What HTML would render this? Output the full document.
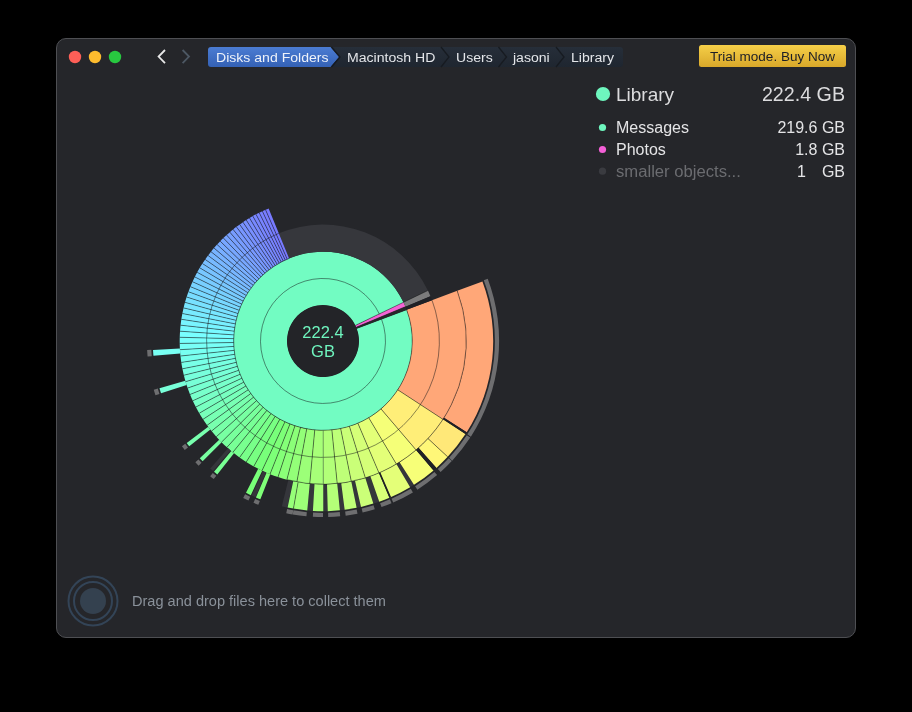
<!DOCTYPE html>
<html><head><meta charset="utf-8">
<style>
html,body{margin:0;padding:0;background:#000;width:912px;height:712px;overflow:hidden;}
body{font-family:"Liberation Sans",sans-serif;position:relative;}
.win{position:absolute;left:56px;top:38px;width:798px;height:598px;background:#25262a;border:1px solid #4e4f53;border-radius:10px;}
.bc{top:50px;font-size:12.5px;line-height:16px;color:#e4e6ea;transform-origin:0 0;}
.abs{position:absolute;white-space:nowrap;-webkit-font-smoothing:antialiased;will-change:transform;}
</style></head><body>
<div class="win"></div>
<svg class="abs" style="left:0;top:0" width="912" height="712" viewBox="0 0 912 712">
<circle cx="75" cy="57" r="6.2" fill="#fe5f57"/>
<circle cx="95" cy="57" r="6.2" fill="#febc2e"/>
<circle cx="115" cy="57" r="6.2" fill="#28c840"/>
<path d="M165,50 L158.6,56.6 L165,63.2" fill="none" stroke="#e8e8e8" stroke-width="1.8"/>
<path d="M182.6,50 L189,56.6 L182.6,63.2" fill="none" stroke="#4d5864" stroke-width="1.8"/>
<path d="M406.64,309.73A89.3,89.3 0 1 1 403.67,302.70L355.52,325.56A36,36 0 1 0 356.72,328.39Z" fill="#72fcc2"/>
<path d="M403.47,302.27A89.3,89.3 0 0 1 405.44,306.68L356.24,327.17A36,36 0 0 0 355.44,325.39Z" fill="#f464d6"/>
<path d="M278.83,233.31A116.4,116.4 0 0 1 427.89,290.52L403.47,302.27A89.3,89.3 0 0 0 289.11,258.38Z" fill="#36373c"/>
<path d="M427.89,290.52A116.4,116.4 0 0 1 430.46,296.27L405.44,306.68A89.3,89.3 0 0 0 403.47,302.27Z" fill="#7b7b7c"/>
<path d="M457.23,290.82A143.3,143.3 0 0 1 442.98,419.36L397.77,389.83A89.3,89.3 0 0 0 406.64,309.73Z" fill="#ffa778"/>
<path d="M482.42,281.39A170.2,170.2 0 0 1 466.70,432.20L443.99,417.78A143.3,143.3 0 0 0 457.23,290.82Z" fill="#ffa778"/>
<path d="M442.98,419.36A143.3,143.3 0 0 1 416.07,449.97L381.00,408.90A89.3,89.3 0 0 0 397.77,389.83Z" fill="#ffee78"/>
<path d="M416.07,449.97A143.3,143.3 0 0 1 396.38,464.09L368.73,417.71A89.3,89.3 0 0 0 381.00,408.90Z" fill="#f5ff78"/>
<path d="M396.38,464.09A143.3,143.3 0 0 1 378.99,472.91L357.89,423.20A89.3,89.3 0 0 0 368.73,417.71Z" fill="#e3ff78"/>
<path d="M378.99,472.91A143.3,143.3 0 0 1 365.37,477.89L349.41,426.31A89.3,89.3 0 0 0 357.89,423.20Z" fill="#d5ff78"/>
<path d="M365.37,477.89A143.3,143.3 0 0 1 351.32,481.47L340.65,428.54A89.3,89.3 0 0 0 349.41,426.31Z" fill="#caff78"/>
<path d="M351.32,481.47A143.3,143.3 0 0 1 337.23,483.59L331.87,429.86A89.3,89.3 0 0 0 340.65,428.54Z" fill="#beff78"/>
<path d="M337.23,483.59A143.3,143.3 0 0 1 323.25,484.30L323.16,430.30A89.3,89.3 0 0 0 331.87,429.86Z" fill="#b2ff78"/>
<path d="M323.25,484.30A143.3,143.3 0 0 1 309.76,483.69L314.75,429.92A89.3,89.3 0 0 0 323.16,430.30Z" fill="#a7ff78"/>
<path d="M309.76,483.69A143.3,143.3 0 0 1 296.89,481.90L306.73,428.80A89.3,89.3 0 0 0 314.75,429.92Z" fill="#9cff78"/>
<path d="M296.89,481.90A143.3,143.3 0 0 1 286.88,479.67L300.49,427.42A89.3,89.3 0 0 0 306.73,428.80Z" fill="#93ff78"/>
<path d="M286.88,479.67A143.3,143.3 0 0 1 278.00,477.05L294.96,425.78A89.3,89.3 0 0 0 300.49,427.42Z" fill="#8bff78"/>
<path d="M278.00,477.05A143.3,143.3 0 0 1 270.02,474.14L289.98,423.97A89.3,89.3 0 0 0 294.96,425.78Z" fill="#84ff78"/>
<path d="M270.02,474.14A143.3,143.3 0 0 1 261.99,470.66L284.98,421.80A89.3,89.3 0 0 0 289.98,423.97Z" fill="#7dff78"/>
<path d="M261.99,470.66A143.3,143.3 0 0 1 253.75,466.45L279.84,419.18A89.3,89.3 0 0 0 284.98,421.80Z" fill="#78ff7a"/>
<path d="M253.75,466.45A143.3,143.3 0 0 1 246.22,461.99L275.15,416.40A89.3,89.3 0 0 0 279.84,419.18Z" fill="#78ff82"/>
<path d="M246.22,461.99A143.3,143.3 0 0 1 239.58,457.52L271.02,413.61A89.3,89.3 0 0 0 275.15,416.40Z" fill="#78ff89"/>
<path d="M239.58,457.52A143.3,143.3 0 0 1 232.82,452.37L266.80,410.40A89.3,89.3 0 0 0 271.02,413.61Z" fill="#78ff8f"/>
<path d="M232.82,452.37A143.3,143.3 0 0 1 226.93,447.33L263.13,407.26A89.3,89.3 0 0 0 266.80,410.40Z" fill="#78ff96"/>
<path d="M226.93,447.33A143.3,143.3 0 0 1 221.49,442.15L259.75,404.03A89.3,89.3 0 0 0 263.13,407.26Z" fill="#78ff9c"/>
<path d="M221.49,442.15A143.3,143.3 0 0 1 216.34,436.70L256.53,400.64A89.3,89.3 0 0 0 259.75,404.03Z" fill="#78ffa2"/>
<path d="M216.34,436.70A143.3,143.3 0 0 1 211.55,431.08L253.55,397.13A89.3,89.3 0 0 0 256.53,400.64Z" fill="#78ffa8"/>
<path d="M211.55,431.08A143.3,143.3 0 0 1 207.11,425.28L250.78,393.52A89.3,89.3 0 0 0 253.55,397.13Z" fill="#78ffae"/>
<path d="M207.11,425.28A143.3,143.3 0 0 1 203.00,419.33L248.22,389.81A89.3,89.3 0 0 0 250.78,393.52Z" fill="#78ffb4"/>
<path d="M203.00,419.33A143.3,143.3 0 0 1 199.25,413.26L245.88,386.03A89.3,89.3 0 0 0 248.22,389.81Z" fill="#78ffba"/>
<path d="M199.25,413.26A143.3,143.3 0 0 1 195.84,407.07L243.76,382.17A89.3,89.3 0 0 0 245.88,386.03Z" fill="#78ffc0"/>
<path d="M195.84,407.07A143.3,143.3 0 0 1 192.77,400.80L241.85,378.26A89.3,89.3 0 0 0 243.76,382.17Z" fill="#78ffc6"/>
<path d="M192.77,400.80A143.3,143.3 0 0 1 190.04,394.46L240.15,374.31A89.3,89.3 0 0 0 241.85,378.26Z" fill="#78ffcb"/>
<path d="M190.04,394.46A143.3,143.3 0 0 1 187.65,388.07L238.65,370.33A89.3,89.3 0 0 0 240.15,374.31Z" fill="#78ffd1"/>
<path d="M187.65,388.07A143.3,143.3 0 0 1 185.59,381.65L237.37,366.33A89.3,89.3 0 0 0 238.65,370.33Z" fill="#78ffd7"/>
<path d="M185.59,381.65A143.3,143.3 0 0 1 183.85,375.22L236.28,362.32A89.3,89.3 0 0 0 237.37,366.33Z" fill="#78ffdc"/>
<path d="M183.85,375.22A143.3,143.3 0 0 1 182.42,368.79L235.40,358.32A89.3,89.3 0 0 0 236.28,362.32Z" fill="#78ffe1"/>
<path d="M182.42,368.79A143.3,143.3 0 0 1 181.31,362.39L234.70,354.33A89.3,89.3 0 0 0 235.40,358.32Z" fill="#78ffe7"/>
<path d="M181.31,362.39A143.3,143.3 0 0 1 180.49,356.02L234.19,350.36A89.3,89.3 0 0 0 234.70,354.33Z" fill="#78ffec"/>
<path d="M180.49,356.02A143.3,143.3 0 0 1 179.96,349.70L233.86,346.42A89.3,89.3 0 0 0 234.19,350.36Z" fill="#78fff1"/>
<path d="M179.96,349.70A143.3,143.3 0 0 1 179.72,343.45L233.71,342.53A89.3,89.3 0 0 0 233.86,346.42Z" fill="#78fff6"/>
<path d="M179.72,343.45A143.3,143.3 0 0 1 179.75,337.27L233.73,338.67A89.3,89.3 0 0 0 233.71,342.53Z" fill="#78fffb"/>
<path d="M179.75,337.27A143.3,143.3 0 0 1 180.04,331.18L233.91,334.88A89.3,89.3 0 0 0 233.73,338.67Z" fill="#78feff"/>
<path d="M180.04,331.18A143.3,143.3 0 0 1 180.58,325.18L234.25,331.14A89.3,89.3 0 0 0 233.91,334.88Z" fill="#78f9ff"/>
<path d="M180.58,325.18A143.3,143.3 0 0 1 181.35,319.30L234.73,327.48A89.3,89.3 0 0 0 234.25,331.14Z" fill="#78f4ff"/>
<path d="M181.35,319.30A143.3,143.3 0 0 1 182.36,313.53L235.36,323.88A89.3,89.3 0 0 0 234.73,327.48Z" fill="#78efff"/>
<path d="M182.36,313.53A143.3,143.3 0 0 1 183.58,307.88L236.12,320.36A89.3,89.3 0 0 0 235.36,323.88Z" fill="#78eaff"/>
<path d="M183.58,307.88A143.3,143.3 0 0 1 185.01,302.37L237.01,316.92A89.3,89.3 0 0 0 236.12,320.36Z" fill="#78e6ff"/>
<path d="M185.01,302.37A143.3,143.3 0 0 1 186.63,296.99L238.02,313.57A89.3,89.3 0 0 0 237.01,316.92Z" fill="#78e1ff"/>
<path d="M186.63,296.99A143.3,143.3 0 0 1 188.43,291.75L239.14,310.31A89.3,89.3 0 0 0 238.02,313.57Z" fill="#78dcff"/>
<path d="M188.43,291.75A143.3,143.3 0 0 1 190.40,286.67L240.37,307.14A89.3,89.3 0 0 0 239.14,310.31Z" fill="#78d8ff"/>
<path d="M190.40,286.67A143.3,143.3 0 0 1 192.53,281.73L241.70,304.07A89.3,89.3 0 0 0 240.37,307.14Z" fill="#78d3ff"/>
<path d="M192.53,281.73A143.3,143.3 0 0 1 194.81,276.96L243.11,301.09A89.3,89.3 0 0 0 241.70,304.07Z" fill="#78cfff"/>
<path d="M194.81,276.96A143.3,143.3 0 0 1 197.22,272.33L244.62,298.21A89.3,89.3 0 0 0 243.11,301.09Z" fill="#78cbff"/>
<path d="M197.22,272.33A143.3,143.3 0 0 1 199.76,267.87L246.20,295.43A89.3,89.3 0 0 0 244.62,298.21Z" fill="#78c7ff"/>
<path d="M199.76,267.87A143.3,143.3 0 0 1 202.42,263.57L247.86,292.75A89.3,89.3 0 0 0 246.20,295.43Z" fill="#78c2ff"/>
<path d="M202.42,263.57A143.3,143.3 0 0 1 205.18,259.44L249.58,290.17A89.3,89.3 0 0 0 247.86,292.75Z" fill="#78beff"/>
<path d="M205.18,259.44A143.3,143.3 0 0 1 208.03,255.46L251.35,287.70A89.3,89.3 0 0 0 249.58,290.17Z" fill="#78baff"/>
<path d="M208.03,255.46A143.3,143.3 0 0 1 210.96,251.65L253.18,285.32A89.3,89.3 0 0 0 251.35,287.70Z" fill="#78b6ff"/>
<path d="M210.96,251.65A143.3,143.3 0 0 1 213.98,248.00L255.06,283.05A89.3,89.3 0 0 0 253.18,285.32Z" fill="#78b3ff"/>
<path d="M213.98,248.00A143.3,143.3 0 0 1 217.05,244.51L256.98,280.87A89.3,89.3 0 0 0 255.06,283.05Z" fill="#78afff"/>
<path d="M217.05,244.51A143.3,143.3 0 0 1 220.18,241.18L258.93,278.80A89.3,89.3 0 0 0 256.98,280.87Z" fill="#78abff"/>
<path d="M220.18,241.18A143.3,143.3 0 0 1 223.36,238.01L260.91,276.82A89.3,89.3 0 0 0 258.93,278.80Z" fill="#78a7ff"/>
<path d="M223.36,238.01A143.3,143.3 0 0 1 226.57,235.00L262.91,274.94A89.3,89.3 0 0 0 260.91,276.82Z" fill="#78a4ff"/>
<path d="M226.57,235.00A143.3,143.3 0 0 1 229.82,232.13L264.93,273.16A89.3,89.3 0 0 0 262.91,274.94Z" fill="#78a0ff"/>
<path d="M229.82,232.13A143.3,143.3 0 0 1 233.09,229.42L266.97,271.47A89.3,89.3 0 0 0 264.93,273.16Z" fill="#789dff"/>
<path d="M233.09,229.42A143.3,143.3 0 0 1 236.37,226.85L269.02,269.87A89.3,89.3 0 0 0 266.97,271.47Z" fill="#7899ff"/>
<path d="M236.37,226.85A143.3,143.3 0 0 1 239.66,224.43L271.07,268.35A89.3,89.3 0 0 0 269.02,269.87Z" fill="#7896ff"/>
<path d="M239.66,224.43A143.3,143.3 0 0 1 242.95,222.14L273.12,266.93A89.3,89.3 0 0 0 271.07,268.35Z" fill="#7892ff"/>
<path d="M242.95,222.14A143.3,143.3 0 0 1 246.24,219.99L275.17,265.59A89.3,89.3 0 0 0 273.12,266.93Z" fill="#788fff"/>
<path d="M246.24,219.99A143.3,143.3 0 0 1 249.51,217.98L277.21,264.34A89.3,89.3 0 0 0 275.17,265.59Z" fill="#788cff"/>
<path d="M249.51,217.98A143.3,143.3 0 0 1 252.77,216.09L279.24,263.16A89.3,89.3 0 0 0 277.21,264.34Z" fill="#7889ff"/>
<path d="M252.77,216.09A143.3,143.3 0 0 1 256.01,214.32L281.25,262.06A89.3,89.3 0 0 0 279.24,263.16Z" fill="#7886ff"/>
<path d="M256.01,214.32A143.3,143.3 0 0 1 259.21,212.68L283.25,261.03A89.3,89.3 0 0 0 281.25,262.06Z" fill="#7883ff"/>
<path d="M259.21,212.68A143.3,143.3 0 0 1 262.39,211.15L285.23,260.08A89.3,89.3 0 0 0 283.25,261.03Z" fill="#7880ff"/>
<path d="M262.39,211.15A143.3,143.3 0 0 1 265.53,209.73L287.18,259.20A89.3,89.3 0 0 0 285.23,260.08Z" fill="#787dff"/>
<path d="M265.53,209.73A143.3,143.3 0 0 1 268.62,208.42L289.11,258.38A89.3,89.3 0 0 0 287.18,259.20Z" fill="#787aff"/>
<path d="M413.95,484.86A170.2,170.2 0 0 1 410.15,487.19L396.38,464.09A143.3,143.3 0 0 0 399.57,462.13Z" fill="#35363b"/>
<path d="M379.25,501.63A170.2,170.2 0 0 1 373.33,503.59L365.37,477.89A143.3,143.3 0 0 0 370.36,476.25Z" fill="#35363b"/>
<path d="M361.00,506.90A170.2,170.2 0 0 1 356.64,507.84L351.32,481.47A143.3,143.3 0 0 0 354.99,480.68Z" fill="#35363b"/>
<path d="M344.63,509.82A170.2,170.2 0 0 1 339.90,510.36L337.23,483.59A143.3,143.3 0 0 0 341.21,483.14Z" fill="#35363b"/>
<path d="M327.75,511.13A170.2,170.2 0 0 1 323.30,511.20L323.25,484.30A143.3,143.3 0 0 0 327.00,484.24Z" fill="#35363b"/>
<path d="M312.91,510.90A170.2,170.2 0 0 1 307.28,510.47L309.76,483.69A143.3,143.3 0 0 0 314.50,484.05Z" fill="#35363b"/>
<path d="M287.32,507.42A170.2,170.2 0 0 1 281.82,506.14L288.33,480.04A143.3,143.3 0 0 0 292.96,481.12Z" fill="#35363b"/>
<path d="M255.41,497.20A170.2,170.2 0 0 1 251.61,495.50L262.89,471.08A143.3,143.3 0 0 0 266.09,472.51Z" fill="#35363b"/>
<path d="M213.14,471.00A170.2,170.2 0 0 1 210.22,468.47L228.05,448.33A143.3,143.3 0 0 0 230.51,450.45Z" fill="#35363b"/>
<path d="M465.50,434.07A170.2,170.2 0 0 1 447.68,456.86L427.97,438.55A143.3,143.3 0 0 0 442.98,419.36Z" fill="#ffe878"/>
<path d="M447.68,456.86A170.2,170.2 0 0 1 436.44,467.88L418.51,447.83A143.3,143.3 0 0 0 427.97,438.55Z" fill="#fff778"/>
<path d="M433.54,470.42A170.2,170.2 0 0 1 413.95,484.86L399.57,462.13A143.3,143.3 0 0 0 416.07,449.97Z" fill="#f7ff78"/>
<path d="M410.15,487.19A170.2,170.2 0 0 1 390.59,497.20L379.91,472.51A143.3,143.3 0 0 0 396.38,464.09Z" fill="#e4ff78"/>
<path d="M389.50,497.67A170.2,170.2 0 0 1 379.25,501.63L370.36,476.25A143.3,143.3 0 0 0 378.99,472.91Z" fill="#d8ff78"/>
<path d="M373.33,503.59A170.2,170.2 0 0 1 361.00,506.90L354.99,480.68A143.3,143.3 0 0 0 365.37,477.89Z" fill="#cbff78"/>
<path d="M356.64,507.84A170.2,170.2 0 0 1 344.63,509.82L341.21,483.14A143.3,143.3 0 0 0 351.32,481.47Z" fill="#bfff78"/>
<path d="M339.90,510.36A170.2,170.2 0 0 1 327.75,511.13L327.00,484.24A143.3,143.3 0 0 0 337.23,483.59Z" fill="#b4ff78"/>
<path d="M323.30,511.20A170.2,170.2 0 0 1 312.91,510.90L314.50,484.05A143.3,143.3 0 0 0 323.25,484.30Z" fill="#a9ff78"/>
<path d="M307.28,510.47A170.2,170.2 0 0 1 293.45,508.61L298.12,482.12A143.3,143.3 0 0 0 309.76,483.69Z" fill="#9dff78"/>
<path d="M293.45,508.61A170.2,170.2 0 0 1 287.61,507.48L293.21,481.17A143.3,143.3 0 0 0 298.12,482.12Z" fill="#96ff78"/>
<path d="M260.35,499.25A170.2,170.2 0 0 1 255.95,497.44L266.55,472.71A143.3,143.3 0 0 0 270.25,474.24Z" fill="#7fff78"/>
<path d="M250.80,495.13A170.2,170.2 0 0 1 246.00,492.78L258.17,468.79A143.3,143.3 0 0 0 262.21,470.77Z" fill="#78ff78"/>
<path d="M217.28,474.38A170.2,170.2 0 0 1 214.05,471.76L231.27,451.10A143.3,143.3 0 0 0 233.99,453.30Z" fill="#78ff93"/>
<path d="M202.65,461.35A170.2,170.2 0 0 1 199.75,458.37L219.23,439.82A143.3,143.3 0 0 0 221.67,442.33Z" fill="#78ffa1"/>
<path d="M189.25,446.25A170.2,170.2 0 0 1 186.72,442.95L208.26,426.84A143.3,143.3 0 0 0 210.39,429.62Z" fill="#78ffae"/>
<path d="M161.04,393.31A170.2,170.2 0 0 1 159.48,388.20L185.32,380.74A143.3,143.3 0 0 0 186.64,385.04Z" fill="#78ffd8"/>
<path d="M153.45,355.83A170.2,170.2 0 0 1 153.03,349.91L179.90,348.50A143.3,143.3 0 0 0 180.25,353.49Z" fill="#78fff3"/>
<path d="M487.73,278.75A176.1,176.1 0 0 1 470.86,436.65L467.33,434.37A171.9,171.9 0 0 0 483.80,280.24Z" fill="#6e6e70"/>
<path d="M470.27,437.55A176.1,176.1 0 0 1 452.21,460.65L449.13,457.80A171.9,171.9 0 0 0 466.76,435.25Z" fill="#6e6e70"/>
<path d="M451.79,461.10A176.1,176.1 0 0 1 440.60,472.08L437.80,468.95A171.9,171.9 0 0 0 448.72,458.23Z" fill="#6e6e70"/>
<path d="M437.14,475.10A176.1,176.1 0 0 1 417.36,489.69L415.11,486.14A171.9,171.9 0 0 0 434.41,471.91Z" fill="#6e6e70"/>
<path d="M412.91,492.42A176.1,176.1 0 0 1 393.22,502.50L391.54,498.64A171.9,171.9 0 0 0 410.77,488.81Z" fill="#6e6e70"/>
<path d="M391.53,503.22A176.1,176.1 0 0 1 381.49,507.10L380.10,503.14A171.9,171.9 0 0 0 389.89,499.35Z" fill="#6e6e70"/>
<path d="M374.78,509.31A176.1,176.1 0 0 1 362.61,512.59L361.67,508.50A171.9,171.9 0 0 0 373.55,505.30Z" fill="#6e6e70"/>
<path d="M357.51,513.69A176.1,176.1 0 0 1 345.68,515.63L345.14,511.47A171.9,171.9 0 0 0 356.69,509.57Z" fill="#6e6e70"/>
<path d="M340.19,516.26A176.1,176.1 0 0 1 328.22,517.02L328.10,512.82A171.9,171.9 0 0 0 339.78,512.08Z" fill="#6e6e70"/>
<path d="M323.00,517.10A176.1,176.1 0 0 1 312.86,516.81L313.10,512.61A171.9,171.9 0 0 0 323.00,512.90Z" fill="#6e6e70"/>
<path d="M306.43,516.32A176.1,176.1 0 0 1 292.72,514.48L293.44,510.34A171.9,171.9 0 0 0 306.83,512.14Z" fill="#6e6e70"/>
<path d="M292.57,514.45A176.1,176.1 0 0 1 286.24,513.22L287.11,509.11A171.9,171.9 0 0 0 293.30,510.31Z" fill="#6e6e70"/>
<path d="M258.32,504.79A176.1,176.1 0 0 1 253.49,502.80L255.14,498.94A171.9,171.9 0 0 0 259.86,500.88Z" fill="#6e6e70"/>
<path d="M248.44,500.54A176.1,176.1 0 0 1 243.19,497.98L245.09,494.23A171.9,171.9 0 0 0 250.22,496.73Z" fill="#6e6e70"/>
<path d="M213.74,479.10A176.1,176.1 0 0 1 210.16,476.20L212.85,472.97A171.9,171.9 0 0 0 216.34,475.81Z" fill="#6e6e70"/>
<path d="M198.59,465.63A176.1,176.1 0 0 1 195.37,462.33L198.41,459.44A171.9,171.9 0 0 0 201.55,462.66Z" fill="#6e6e70"/>
<path d="M184.71,450.02A176.1,176.1 0 0 1 181.90,446.36L185.26,443.85A171.9,171.9 0 0 0 188.00,447.42Z" fill="#6e6e70"/>
<path d="M155.47,395.27A176.1,176.1 0 0 1 153.76,389.69L157.80,388.53A171.9,171.9 0 0 0 159.47,393.98Z" fill="#6e6e70"/>
<path d="M147.58,356.50A176.1,176.1 0 0 1 147.13,350.06L151.33,349.85A171.9,171.9 0 0 0 151.77,356.13Z" fill="#6e6e70"/>
<path d="M381.54,319.11A62.5,62.5 0 1 1 379.46,314.19M356.72,328.39L406.64,309.73M355.44,325.39L403.47,302.27M356.24,327.17L405.44,306.68M403.47,302.27L427.89,290.52M397.77,389.83L442.98,419.36M381.00,408.90L416.07,449.97M368.73,417.71L396.38,464.09M357.89,423.20L378.99,472.91M349.41,426.31L365.37,477.89M340.65,428.54L351.32,481.47M331.87,429.86L337.23,483.59M314.75,429.92L309.76,483.69M306.73,428.80L296.89,481.90M300.49,427.42L286.88,479.67M294.96,425.78L278.00,477.05M289.98,423.97L270.02,474.14M284.98,421.80L261.99,470.66M279.84,419.18L253.75,466.45M275.15,416.40L246.22,461.99M271.02,413.61L239.58,457.52M266.80,410.40L232.82,452.37M263.13,407.26L226.93,447.33M259.75,404.03L221.49,442.15M256.53,400.64L216.34,436.70M253.55,397.13L211.55,431.08M250.78,393.52L207.11,425.28M248.22,389.81L203.00,419.33M245.88,386.03L199.25,413.26M243.76,382.17L195.84,407.07M241.85,378.26L192.77,400.80M240.15,374.31L190.04,394.46M238.65,370.33L187.65,388.07M237.37,366.33L185.59,381.65M236.28,362.32L183.85,375.22M235.40,358.32L182.42,368.79M234.70,354.33L181.31,362.39M234.19,350.36L180.49,356.02M233.86,346.42L179.96,349.70M233.71,342.53L179.72,343.45M233.73,338.67L179.75,337.27M233.91,334.88L180.04,331.18M234.25,331.14L180.58,325.18M234.73,327.48L181.35,319.30M235.36,323.88L182.36,313.53M236.12,320.36L183.58,307.88M237.01,316.92L185.01,302.37M238.02,313.57L186.63,296.99M239.14,310.31L188.43,291.75M240.37,307.14L190.40,286.67M241.70,304.07L192.53,281.73M243.11,301.09L194.81,276.96M244.62,298.21L197.22,272.33M246.20,295.43L199.76,267.87M247.86,292.75L202.42,263.57M249.58,290.17L205.18,259.44M251.35,287.70L208.03,255.46M253.18,285.32L210.96,251.65M255.06,283.05L213.98,248.00M256.98,280.87L217.05,244.51M258.93,278.80L220.18,241.18M260.91,276.82L223.36,238.01M262.91,274.94L226.57,235.00M264.93,273.16L229.82,232.13M266.97,271.47L233.09,229.42M269.02,269.87L236.37,226.85M271.07,268.35L239.66,224.43M273.12,266.93L242.95,222.14M275.17,265.59L246.24,219.99M277.21,264.34L249.51,217.98M279.24,263.16L252.77,216.09M281.25,262.06L256.01,214.32M283.25,261.03L259.21,212.68M285.23,260.08L262.39,211.15M287.18,259.20L265.53,209.73M406.64,309.73A89.3,89.3 0 1 1 289.11,258.38M432.03,300.24A116.4,116.4 0 1 1 278.83,233.31M457.23,290.82A143.3,143.3 0 0 1 286.88,479.67M427.97,438.55L447.68,456.86M298.12,482.12L293.45,508.61" fill="none" stroke="rgba(18,20,22,0.7)" stroke-width="0.7"/>
<path d="M323.16,430.30L323.25,484.30" fill="none" stroke="rgba(90,130,80,0.7)" stroke-width="0.9"/>
<path d="M466.70,432.20A170.2,170.2 0 0 1 465.50,434.07L442.98,419.36A143.3,143.3 0 0 0 443.99,417.78Z" fill="#202126"/>
<path d="M436.44,467.88A170.2,170.2 0 0 1 433.54,470.42L416.07,449.97A143.3,143.3 0 0 0 418.51,447.83Z" fill="#202126"/>
<path d="M391.00,497.02A170.2,170.2 0 0 1 389.37,497.73L378.88,472.96A143.3,143.3 0 0 0 380.26,472.36Z" fill="#1f2025"/>
<path d="M405.44,306.68A89.3,89.3 0 0 1 406.64,309.73L356.72,328.39A36,36 0 0 0 356.24,327.17Z" fill="#26272b"/>
<path d="M430.46,296.27A116.4,116.4 0 0 1 432.03,300.24L406.64,309.73A89.3,89.3 0 0 0 405.44,306.68Z" fill="#202126"/>
<circle cx="323.0" cy="341.0" r="35.7" fill="#232428"/>
</svg>
<!-- breadcrumbs -->
<svg class="abs" style="left:0;top:0" width="912" height="712">
<defs>
<linearGradient id="gb" x1="0" y1="0" x2="0" y2="1"><stop offset="0" stop-color="#4b7cd3"/><stop offset="1" stop-color="#3461b5"/></linearGradient>
<linearGradient id="gd" x1="0" y1="0" x2="0" y2="1"><stop offset="0" stop-color="#262e39"/><stop offset="1" stop-color="#1f2630"/></linearGradient>
<linearGradient id="gy" x1="0" y1="0" x2="0" y2="1"><stop offset="0" stop-color="#f5cf48"/><stop offset="1" stop-color="#d9a82a"/></linearGradient>
</defs>
<path d="M331,47 L620,47 Q623,47 623,50 L623,64 Q623,67 620,67 L331,67 Z" fill="url(#gd)"/>
<path d="M441,47 L449,57 L441,67" fill="none" stroke="#171b21" stroke-width="1.3"/>
<path d="M498.5,47 L506.5,57 L498.5,67" fill="none" stroke="#171b21" stroke-width="1.3"/>
<path d="M556,47 L564,57 L556,67" fill="none" stroke="#171b21" stroke-width="1.3"/>
<path d="M211,47 L330.5,47 L339,57 L330.5,67 L211,67 Q208,67 208,64 L208,50 Q208,47 211,47 Z" fill="url(#gb)"/>
<path d="M331.5,47 L340,57 L331.5,67" fill="none" stroke="#161a20" stroke-width="1.3"/>
<rect x="699" y="45" width="147" height="22" rx="2.5" fill="url(#gy)"/>
<circle cx="93" cy="601" r="24.5" fill="none" stroke="#334457" stroke-width="2"/>
<circle cx="93" cy="601" r="19" fill="none" stroke="#334457" stroke-width="2"/>
<circle cx="93" cy="601" r="13" fill="#34414f"/>
<circle cx="603" cy="94" r="7.1" fill="#6ef6be"/>
<circle cx="602.5" cy="127.5" r="3.6" fill="#6ef6be"/>
<circle cx="602.5" cy="149.5" r="3.6" fill="#f35fd6"/>
<circle cx="602.5" cy="171.2" r="3.6" fill="#3a3b40"/>
</svg>
<div class="abs bc" style="left:215.5px;color:#eef2fa;transform:scaleX(1.125)">Disks and Folders</div>
<div class="abs bc" style="left:346.5px;transform:scaleX(1.125)">Macintosh HD</div>
<div class="abs bc" style="left:455.5px;transform:scaleX(1.125)">Users</div>
<div class="abs bc" style="left:512.5px;transform:scaleX(1.125)">jasoni</div>
<div class="abs bc" style="left:570.5px;transform:scaleX(1.125)">Library</div>
<div class="abs" style="left:710px;top:49px;font-size:12.3px;line-height:16px;color:#1c1e26;transform:scaleX(1.1);transform-origin:0 0;">Trial mode. Buy Now</div>
<div class="abs" style="left:616px;top:83.5px;font-size:19px;line-height:22px;color:#dcdcde;">Library</div>
<div class="abs" style="left:700px;top:84px;width:145px;text-align:right;font-size:19.3px;line-height:22px;color:#dcdcde;transform:scaleX(1.02);transform-origin:100% 0;">222.4 GB</div>
<div class="abs" style="left:616px;top:118px;font-size:16px;line-height:19px;color:#e4e4e6;">Messages</div>
<div class="abs" style="left:616px;top:140px;font-size:16px;line-height:19px;color:#e4e4e6;">Photos</div>
<div class="abs" style="left:616px;top:162px;font-size:16px;line-height:19px;color:#6b6c70;transform:scaleX(1.04);transform-origin:0 0;">smaller objects...</div>
<div class="abs" style="left:700px;top:118px;width:145px;text-align:right;font-size:16px;line-height:19px;color:#e4e4e6;">219.6 GB</div>
<div class="abs" style="left:700px;top:140px;width:145px;text-align:right;font-size:16px;line-height:19px;color:#e4e4e6;">1.8 GB</div>
<div class="abs" style="left:797px;top:162px;font-size:16px;line-height:19px;color:#e4e4e6;">1</div>
<div class="abs" style="left:700px;top:162px;width:145px;text-align:right;font-size:16px;line-height:19px;color:#e4e4e6;">GB</div>
<div class="abs" style="left:132px;top:593px;font-size:14.55px;line-height:17px;color:#8a919a;">Drag and drop files here to collect them</div>
<div class="abs" style="left:290px;top:323px;width:66px;text-align:center;color:#6ff5bf;font-size:16.5px;line-height:19px;">222.4<br>GB</div>
</body></html>
